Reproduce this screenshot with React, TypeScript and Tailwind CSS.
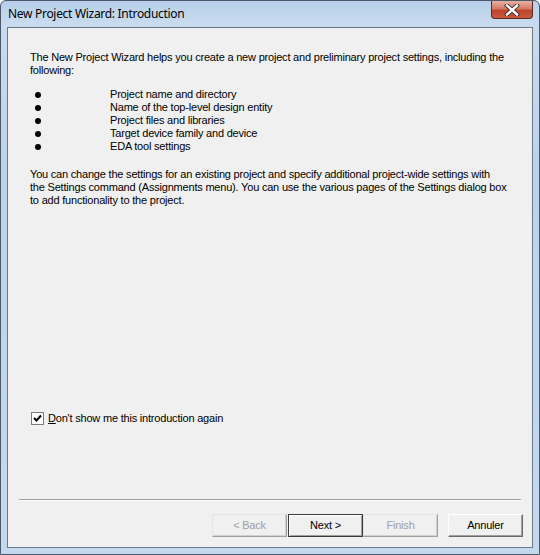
import React from "react";

const bullets = [
  "Project name and directory",
  "Name of the top-level design entity",
  "Project files and libraries",
  "Target device family and device",
  "EDA tool settings",
];

function CloseButton() {
  return (
    <div className="flex h-[18px] w-[42px] items-center justify-center rounded-b-[4px] border border-t-0 border-[#5b2a24] bg-[linear-gradient(180deg,#e8b0a4_0%,#d47a68_45%,#c0432c_55%,#c95a3f_100%)]">
      <svg width="16" height="12" viewBox="0 0 16 12">
        <path d="M3 1.5 L13 10.5 M13 1.5 L3 10.5" stroke="#3b2a2a" strokeWidth="4.2" strokeLinecap="square" />
        <path d="M3 1.5 L13 10.5 M13 1.5 L3 10.5" stroke="#ffffff" strokeWidth="2.4" strokeLinecap="square" />
      </svg>
    </div>
  );
}

function WizardButton({ label, disabled, isDefault }: { label: string; disabled?: boolean; isDefault?: boolean }) {
  return (
    <div
      className={
        "flex h-[23px] w-[75px] items-center justify-center text-[11px] " +
        (isDefault
          ? "border border-[#3a3a3a] bg-[#f0f0f0] text-black shadow-[inset_1px_1px_0_#ffffff,inset_-1px_-1px_0_#a0a0a0]"
          : disabled
          ? "border border-t-[#e3e3e3] border-l-[#e3e3e3] border-b-[#a0a0a0] border-r-[#a0a0a0] bg-[#f0f0f0] text-[#a0a0a0] shadow-[inset_-1px_-1px_0_#d0d0d0]"
          : "border border-t-[#ffffff] border-l-[#ffffff] border-b-[#696969] border-r-[#696969] bg-[#f0f0f0] text-black shadow-[inset_-1px_-1px_0_#a0a0a0]")
      }
    >
      {label}
    </div>
  );
}

export default function App() {
  return (
    <div className="flex h-[555px] w-[540px] flex-col rounded-t-[6px] border border-[#4a5868] bg-[linear-gradient(180deg,#b6cfe8_0%,#c8dbef_4%,#bdd3ea_30%,#c4d9ee_100%)] px-[6px] pb-[6px] font-['Liberation_Sans',sans-serif]">
      <div className="flex h-[26px] items-start justify-between">
        <span className="mt-[6px] pl-[1px] font-['Noto_Sans',sans-serif] text-[12px] leading-[14px] tracking-[-0.3px] text-black">
          New Project Wizard: Introduction
        </span>
        <CloseButton />
      </div>
      <div className="flex flex-1 flex-col border border-[#6c7a88] bg-[#f0f0f0] text-[11px] leading-[13px] tracking-[-0.2px] text-black">
        <div className="whitespace-nowrap pl-[22px] pt-[23px]">
          <p>
            The New Project Wizard helps you create a new project and preliminary project settings, including the
            <br />
            following:
          </p>
          <ul className="mt-[11px]">
            {bullets.map((b) => (
              <li key={b} className="flex items-center">
                <span className="ml-[5px] h-[6px] w-[6px] rounded-full bg-black" />
                <span className="ml-[69px]">{b}</span>
              </li>
            ))}
          </ul>
          <p className="mt-[15px]">
            You can change the settings for an existing project and specify additional project-wide settings with
            <br />
            the Settings command (Assignments menu). You can use the various pages of the Settings dialog box
            <br />
            to add functionality to the project.
          </p>
        </div>
        <div className="flex-1" />
        <div className="ml-[23px] flex items-center">
          <div className="flex h-[13px] w-[13px] items-center justify-center border border-[#7a7a7a] bg-white">
            <svg width="9" height="9" viewBox="0 0 9 9">
              <path d="M1 4 L3.5 6.5 L8 1.5" stroke="#000" strokeWidth="2" fill="none" />
            </svg>
          </div>
          <span className="ml-[4px]">
            <span className="underline">D</span>on't show me this introduction again
          </span>
        </div>
        <div className="mx-[11px] mt-[74px] h-[2px] border-t border-b border-t-[#a0a0a0] border-b-white" />
        <div className="mt-[13px] flex justify-end pb-[10px] pr-[9px]">
          <WizardButton label="< Back" disabled />
          <div className="w-[1px]" />
          <WizardButton label="Next >" isDefault />
          <WizardButton label="Finish" disabled />
          <div className="w-[10px]" />
          <WizardButton label="Annuler" />
        </div>
      </div>
    </div>
  );
}
